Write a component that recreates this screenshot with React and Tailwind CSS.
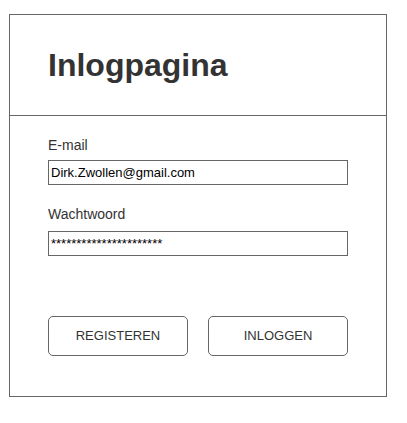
import React from 'react'

const fieldCls = "block w-[300px] h-[25px] border border-[#666] bg-white px-[2px] text-[13px] leading-[23px] text-black outline-none";
const btnCls = "w-[140px] h-[40px] rounded-[5px] border border-[#666] bg-white text-[13px] text-[#333]";

export default function App() {
  return (
    <div className="pl-[9px] pt-[14px] bg-white min-h-[423px]" style={{ fontFamily: '"Liberation Sans", Arial, sans-serif' }}>
      <div className="w-[378px] h-[383px] border border-[#666] flex flex-col">
        <div className="h-[101px] border-b border-[#666] pl-[38px] pt-[32px]">
          <h1 className="text-[32px] leading-[36px] font-bold text-[#333]">Inlogpagina</h1>
        </div>

        <div className="px-[38px] pt-[21px] flex flex-col">
          <label className="text-[14px] leading-[16px] text-[#333] mb-[7px]">E-mail</label>
          <input className={fieldCls} defaultValue="Dirk.Zwollen@gmail.com" />

          <label className="text-[14px] leading-[16px] text-[#333] mt-[21px] mb-[9px]">Wachtwoord</label>
          <input className={fieldCls} defaultValue="**********************" />

          <div className="flex gap-[20px] mt-[60px]">
            <button className={btnCls}>REGISTEREN</button>
            <button className={btnCls}>INLOGGEN</button>
          </div>
        </div>
      </div>
    </div>
  )
}
